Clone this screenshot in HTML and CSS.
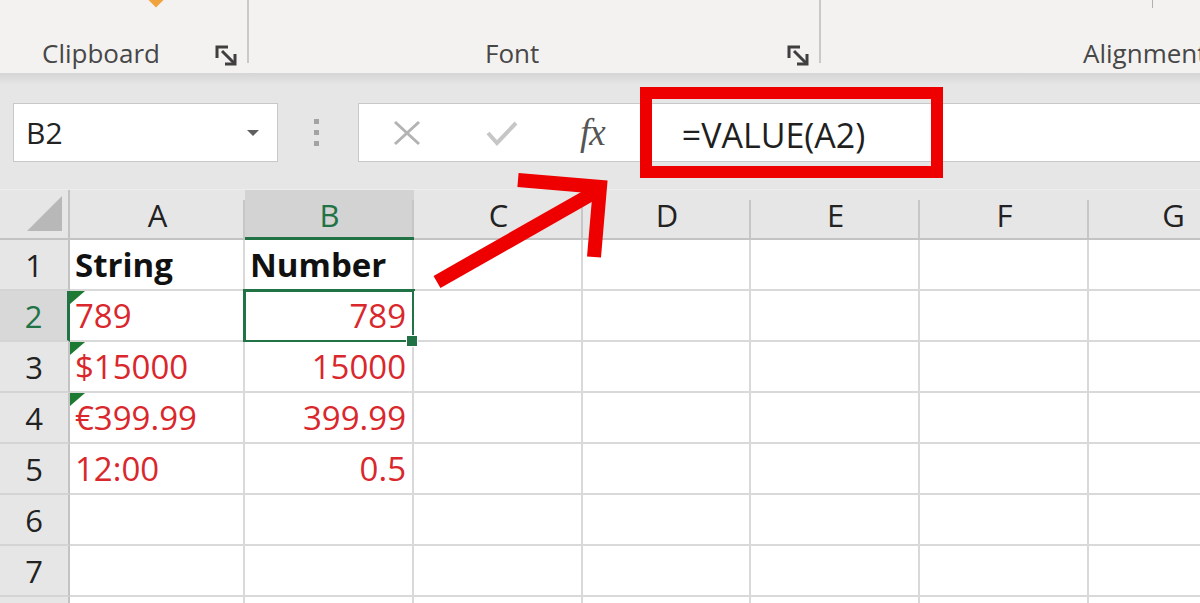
FILE: index.html
```html
<!DOCTYPE html>
<html lang="en">
<head>
<meta charset="utf-8">
<title>VALUE function</title>
<link rel="stylesheet" href="styles.css">
</head>
<body>
<div class="app">
  <header class="ribbon">
    <section class="group g-clip">
      <div class="paste-tip"></div>
      <div class="group-foot">
        <span class="label">Clipboard</span>
        <svg class="launcher" viewBox="0 0 23 21" width="23" height="21"><path d="M2 13V2h11" fill="none" stroke="#3f3f3f" stroke-width="3"/><path d="M7 6l12 12" fill="none" stroke="#3f3f3f" stroke-width="3"/><path d="M20 9v10H10" fill="none" stroke="#3f3f3f" stroke-width="3"/></svg>
      </div>
    </section>
    <section class="group g-font">
      <div class="group-foot">
        <span class="label">Font</span>
        <svg class="launcher" viewBox="0 0 23 21" width="23" height="21"><path d="M2 13V2h11" fill="none" stroke="#3f3f3f" stroke-width="3"/><path d="M7 6l12 12" fill="none" stroke="#3f3f3f" stroke-width="3"/><path d="M20 9v10H10" fill="none" stroke="#3f3f3f" stroke-width="3"/></svg>
      </div>
    </section>
    <section class="group g-align">
      <div class="tick"></div>
      <div class="group-foot">
        <span class="label">Alignment</span>
      </div>
    </section>
  </header>

  <div class="formula-bar">
    <div class="namebox">
      <span class="nb-text">B2</span>
      <span class="caret"></span>
    </div>
    <div class="grip"><i></i><i></i><i></i></div>
    <div class="fbox">
      <svg class="fb-x" viewBox="0 0 30 26" width="30" height="26"><path d="M3 2l24 22M27 2L3 24" stroke="#b3b3b3" stroke-width="3" fill="none"/></svg>
      <svg class="fb-ok" viewBox="0 0 32 26" width="32" height="26"><path d="M2 13l9 10L30 3" stroke="#c6c6c6" stroke-width="4" fill="none"/></svg>
      <span class="fx">fx</span>
      <span class="ftext">=VALUE(A2)</span>
    </div>
  </div>

  <div class="sheet">
    <div class="corner"><svg viewBox="0 0 36 36" width="36" height="36"><path d="M0 35L35 35L35 0Z" fill="#b8b8b8"/></svg></div>
    <div class="ch">A</div>
    <div class="ch sel">B</div>
    <div class="ch">C</div>
    <div class="ch">D</div>
    <div class="ch">E</div>
    <div class="ch">F</div>
    <div class="ch">G</div>

    <div class="rh">1</div>
    <div class="c b">String</div>
    <div class="c b">Number</div>
    <div class="c"></div><div class="c"></div><div class="c"></div><div class="c"></div><div class="c"></div>

    <div class="rh sel">2</div>
    <div class="c red warn">789</div>
    <div class="c red num active">789</div>
    <div class="c"></div><div class="c"></div><div class="c"></div><div class="c"></div><div class="c"></div>

    <div class="rh">3</div>
    <div class="c red warn">$15000</div>
    <div class="c red num">15000</div>
    <div class="c"></div><div class="c"></div><div class="c"></div><div class="c"></div><div class="c"></div>

    <div class="rh">4</div>
    <div class="c red warn">€399.99</div>
    <div class="c red num">399.99</div>
    <div class="c"></div><div class="c"></div><div class="c"></div><div class="c"></div><div class="c"></div>

    <div class="rh">5</div>
    <div class="c red">12:00</div>
    <div class="c red num">0.5</div>
    <div class="c"></div><div class="c"></div><div class="c"></div><div class="c"></div><div class="c"></div>

    <div class="rh">6</div>
    <div class="c"></div><div class="c"></div><div class="c"></div><div class="c"></div><div class="c"></div><div class="c"></div><div class="c"></div>

    <div class="rh">7</div>
    <div class="c"></div><div class="c"></div><div class="c"></div><div class="c"></div><div class="c"></div><div class="c"></div><div class="c"></div>

    <div class="rh"></div>
    <div class="c"></div><div class="c"></div><div class="c"></div><div class="c"></div><div class="c"></div><div class="c"></div><div class="c"></div>
  </div>

  <div class="callout"></div>
  <svg class="arrow" viewBox="0 0 1200 603" width="1200" height="603">
    <path d="M437 282L597 191" stroke="#ee0000" stroke-width="14" fill="none"/>
    <path d="M518 180L600 187L594 257" stroke="#ee0000" stroke-width="14" fill="none" stroke-linejoin="miter"/>
  </svg>
</div>
</body>
</html>
```

FILE: styles.css
```css
* { box-sizing: border-box; }
html, body { margin: 0; padding: 0; }
body {
  width: 1200px;
  height: 603px;
  overflow: hidden;
  background: #ffffff;
  font-family: "Open Sans", "Noto Sans", sans-serif;
  color: #222;
}
.app {
  position: relative;
  width: 1200px;
  height: 603px;
  overflow: hidden;
}

/* Ribbon */
.ribbon {
  display: flex;
  height: 73px;
  background: #f3f2f1;
}
.group {
  position: relative;
  display: flex;
  flex-direction: column;
  justify-content: flex-end;
  height: 73px;
  padding-bottom: 3px;
}
.group::after {
  content: "";
  position: absolute;
  right: 0;
  top: 0;
  width: 2px;
  height: 63px;
  background: #c9c9c9;
}
.g-clip { width: 249px; flex: none; }
.g-font { width: 572px; flex: none; }
.g-align { flex: 1; min-width: 0; overflow: hidden; }
.g-align::after { display: none; }
.group-foot {
  display: flex;
  align-items: center;
  height: 34px;
  line-height: 34px;
}
.g-clip .group-foot { padding-left: 42px; padding-right: 11px; }
.g-font .group-foot { padding-left: 236px; padding-right: 11px; }
.g-align .group-foot { padding-left: 262px; white-space: nowrap; }
.label {
  font-size: 26px;
  color: #474747;
}
.launcher { margin-left: auto; display: block; margin-top: 4px; }
.paste-tip {
  position: absolute;
  left: 150px;
  top: -7px;
  width: 12px;
  height: 12px;
  background: #f0a33c;
  transform: rotate(45deg);
}
.tick {
  position: absolute;
  left: 331px;
  top: 0;
  width: 1px;
  height: 8px;
  background: #b0b0b0;
}

/* Formula bar */
.formula-bar {
  display: flex;
  align-items: flex-start;
  height: 117px;
  padding: 30px 0 0 13px;
  background: linear-gradient(#d5d5d5 0, #e6e6e6 12px, #e6e6e6 100%);
  border-bottom: 1px solid #ededed;
}
.namebox {
  display: flex;
  align-items: center;
  width: 265px;
  height: 59px;
  background: #fff;
  border: 1px solid #c8c8c8;
  padding: 0 18px 0 12px;
}
.nb-text {
  font-size: 30px;
  color: #222;
}
.caret {
  margin-left: auto;
  width: 0;
  height: 0;
  border-left: 6px solid transparent;
  border-right: 6px solid transparent;
  border-top: 6px solid #5f5f5f;
}
.grip {
  width: 80px;
  height: 59px;
  display: flex;
  flex-direction: column;
  align-items: center;
  justify-content: center;
  gap: 6px;
  padding-right: 4px;
}
.grip i {
  display: block;
  width: 5px;
  height: 5px;
  background: #a3a3a3;
}
.fbox {
  flex: 1;
  display: flex;
  align-items: center;
  height: 59px;
  background: #fff;
  border: 1px solid #c8c8c8;
  border-right: none;
  padding-left: 33px;
}
.fb-x { display: block; flex: none; }
.fb-ok { display: block; flex: none; margin-left: 64px; }
.fx {
  margin-left: 62px;
  font-family: "Liberation Serif", "DejaVu Serif", serif;
  font-style: italic;
  font-size: 37px;
  color: #555;
  letter-spacing: -1px;
  line-height: 1;
}
.ftext {
  margin-left: 77px;
  font-size: 34px;
  color: #1f1f1f;
  margin-top: 4px;
  white-space: nowrap;
}

/* Sheet */
.sheet {
  display: grid;
  grid-template-columns: 70px 175px 169px 169px 168px 169px 169px 169px;
  grid-template-rows: 50px repeat(8, 51px);
  width: 1258px;
}
.corner {
  background: #e6e6e6;
  border-right: 2px solid #c3c3c3;
  border-bottom: 2px solid #c3c3c3;
  display: flex;
  align-items: flex-end;
  justify-content: flex-end;
  padding: 0 5px 6px 0;
}
.corner svg { display: block; }
.ch {
  position: relative;
  background: #e6e6e6;
  border-bottom: 2px solid #c3c3c3;
  display: flex;
  align-items: center;
  justify-content: center;
  font-size: 31px;
  color: #222;
  padding-top: 2px;
}
.ch::after {
  content: "";
  position: absolute;
  right: 0;
  top: 10px;
  bottom: 0;
  width: 2px;
  background: #c6c6c6;
}
.ch.sel {
  background: #d3d3d3;
  color: #217346;
  border-bottom: 3px solid #217346;
}
.rh {
  background: #e6e6e6;
  border-right: 2px solid #c3c3c3;
  border-bottom: 2px solid #d4d4d4;
  display: flex;
  align-items: center;
  justify-content: center;
  font-size: 31px;
  color: #222;
}
.rh.sel {
  background: #d8d8d8;
  color: #217346;
  border-right: 3px solid #217346;
}
.c {
  position: relative;
  background: #fff;
  border-right: 2px solid #d9d9d9;
  border-bottom: 2px solid #d9d9d9;
  display: flex;
  align-items: center;
  padding: 0 6px 0 5px;
  font-size: 33px;
  white-space: nowrap;
  color: #111;
}
.c.b { font-weight: 700; color: #111; }
.c.red { color: #d9272c; }
.c.num { justify-content: flex-end; }
.c.warn::before {
  content: "";
  position: absolute;
  left: 0;
  top: 0;
  width: 0;
  height: 0;
  border-top: 13px solid #1d7a32;
  border-right: 15px solid transparent;
}
.c.active::after {
  content: "";
  position: absolute;
  left: -2px;
  top: -2px;
  right: -3px;
  bottom: -3px;
  border: 3px solid #217346;
  pointer-events: none;
}
.c.active::before {
  content: "";
  position: absolute;
  right: -6px;
  bottom: -7px;
  width: 10px;
  height: 10px;
  background: #217346;
  border: 1px solid #fff;
  z-index: 2;
}

/* Annotation overlays */
.callout {
  position: absolute;
  left: 640px;
  top: 87px;
  width: 303px;
  height: 91px;
  border: 12px solid #ee0000;
}
.arrow {
  position: absolute;
  left: 0;
  top: 0;
  pointer-events: none;
}
```
